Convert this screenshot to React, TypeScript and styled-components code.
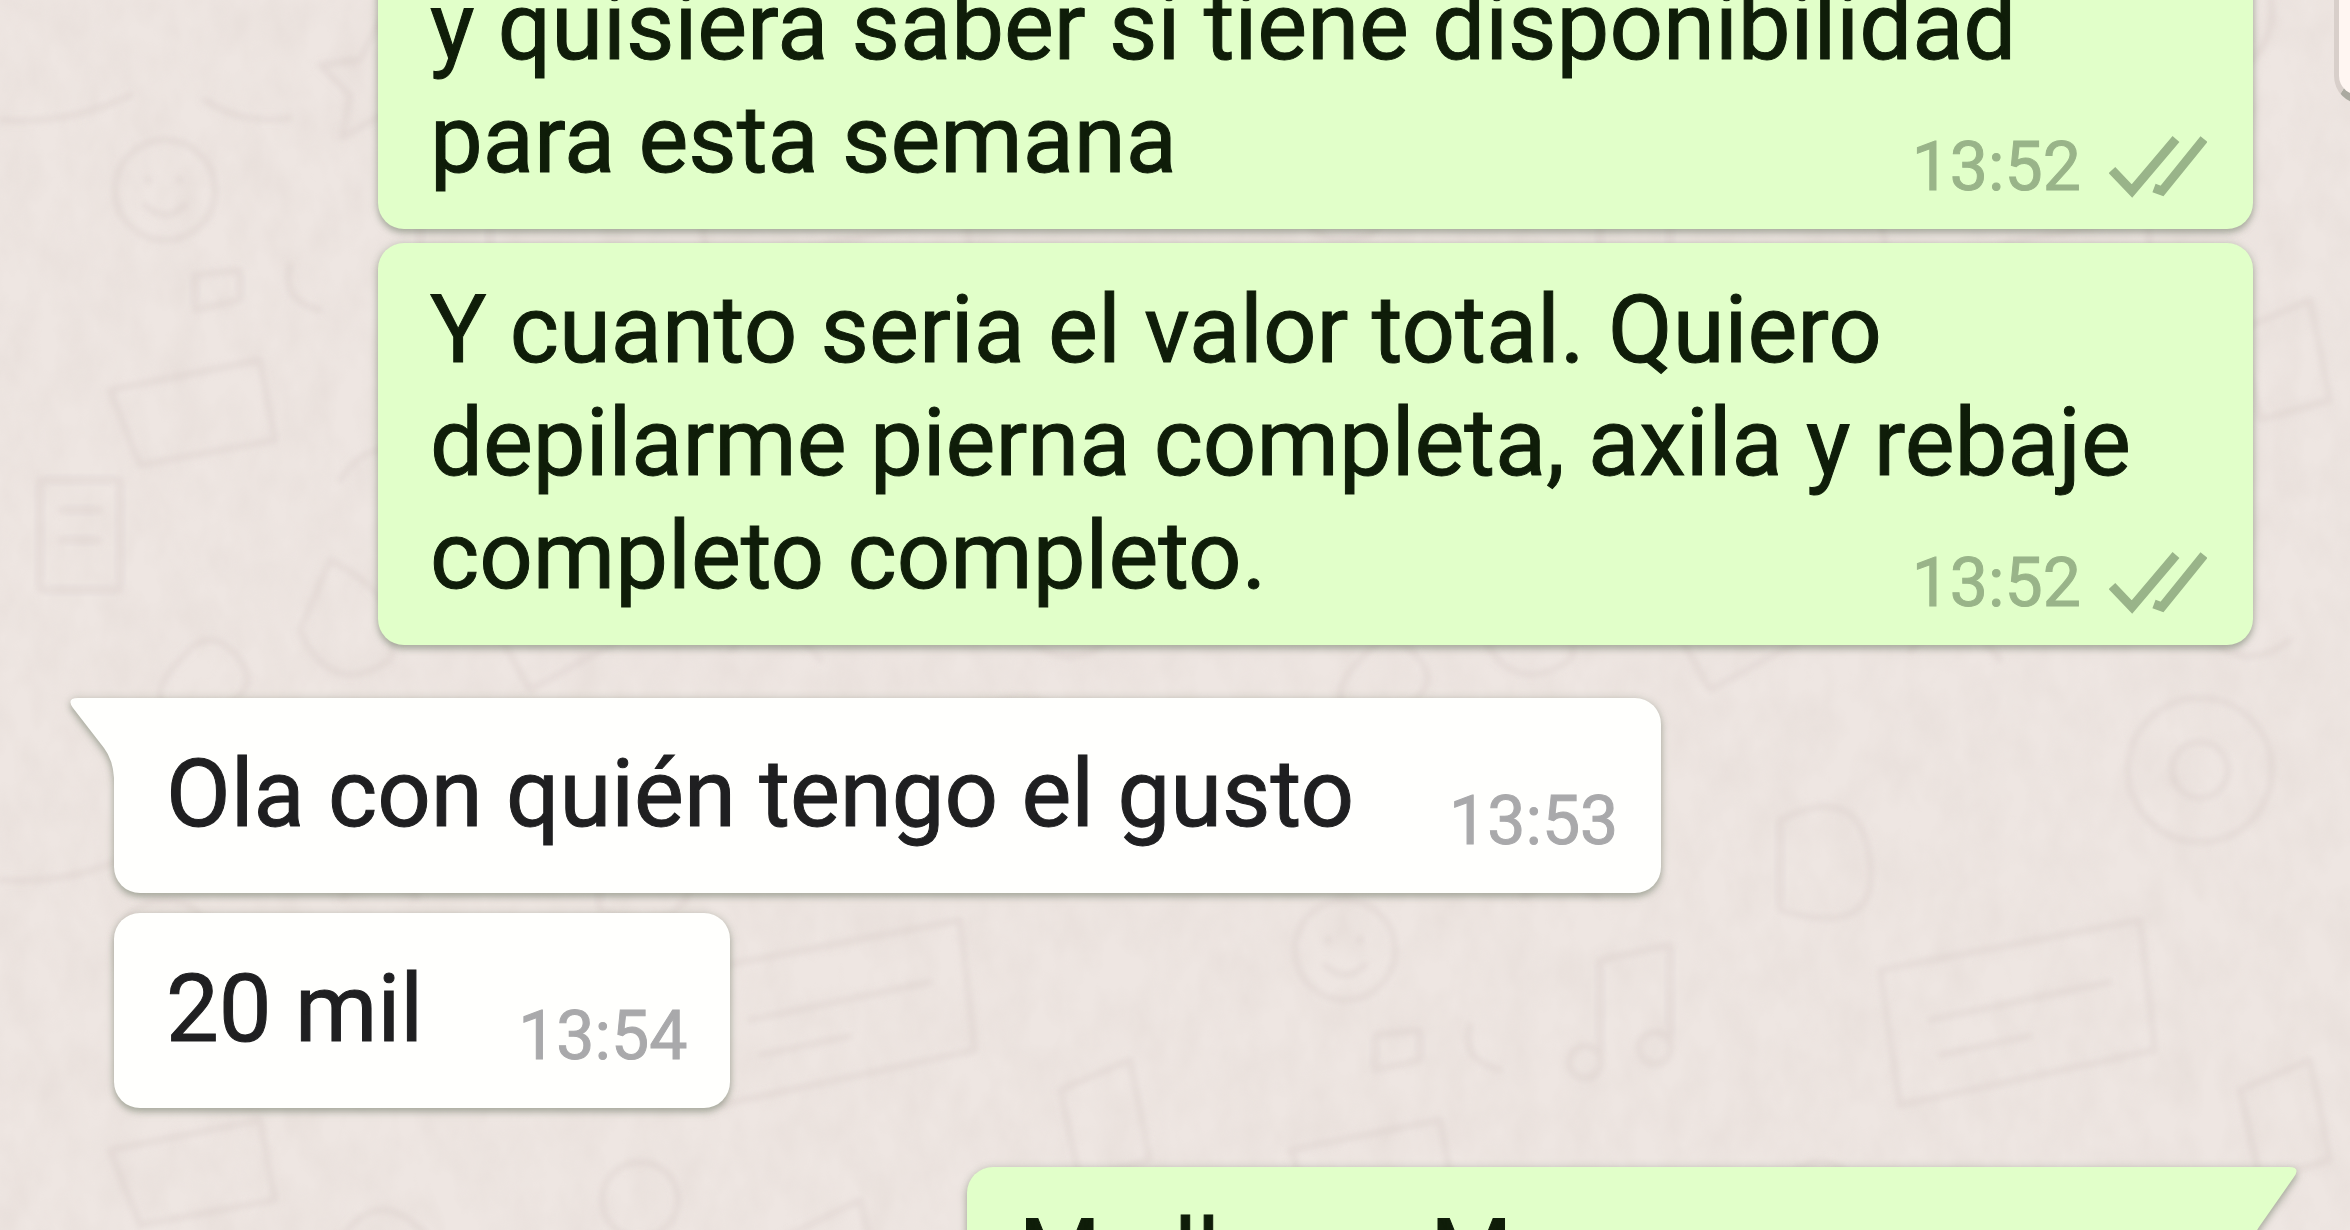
import React from 'react';
import styled, { createGlobalStyle, css } from 'styled-components';

const GlobalStyle = createGlobalStyle`
  * { box-sizing: border-box; }
  html, body { margin: 0; }
  body { background: #eee6e2; overflow: hidden; }
`;

type Side = 'sent' | 'received';

const Chat = styled.main`
  position: relative;
  isolation: isolate;
  height: 100vh;
  overflow: hidden;
  padding: 0 97px 0 114px;
  font-family: Roboto, 'Liberation Sans', sans-serif;
`;

const Wallpaper = styled.svg`
  position: absolute;
  inset: 0;
  z-index: -1;
  width: 100%;
  height: 100%;
`;

const Thread = styled.ol`
  display: flex;
  flex-direction: column;
  gap: 14px;
  margin: -60px 0 0;
  padding: 0;
  list-style: none;
`;

const Row = styled.li<{ $side: Side; $opensGroup?: boolean }>`
  display: flex;
  justify-content: ${(p) => (p.$side === 'sent' ? 'flex-end' : 'flex-start')};
  margin-top: ${(p) => (p.$opensGroup ? 39 : 0)}px;
  margin-bottom: ${(p) => (p.$side === 'received' ? 6 : 0)}px;
`;

const Bubble = styled.article<{ $side: Side; $tail?: boolean }>`
  position: relative;
  max-width: calc(100% - 264px);
  border-radius: 26px;
  color: #0f1d09;
  background: #e1ffc9;
  padding: 31px 46px 22px 52px;
  filter: drop-shadow(0 4px 3px rgba(100, 112, 92, 0.4)) drop-shadow(0 0 4px rgba(100, 112, 92, 0.24));
  ${(p) =>
    p.$side === 'received' &&
    css`
      color: #1f1f21;
      background: #fffffd;
      padding: 40px 43px 32px 52px;
    `}
  ${(p) => p.$tail && (p.$side === 'sent' ? 'border-top-right-radius: 0;' : 'border-top-left-radius: 0;')}
`;

const Text = styled.div`
  display: flow-root;
  font-size: 94px;
  line-height: 113px;
  -webkit-text-stroke: 1px currentColor;
`;

const Meta = styled.span<{ $side: Side }>`
  float: right;
  display: flex;
  align-items: center;
  gap: 28px;
  height: 80px;
  margin: 43px 0 0 ${(p) => (p.$side === 'received' ? 95 : 64)}px;
  color: ${(p) => (p.$side === 'received' ? '#a9a9ab' : '#99b489')};
`;

const Time = styled.time`
  font-size: 68px;
  line-height: 80px;
`;

const Ticks = styled.svg`
  width: 98px;
  height: 64px;
`;

const Tail = styled.svg<{ $side: Side }>`
  position: absolute;
  top: 0;
  width: 52px;
  height: 80px;
  ${(p) => (p.$side === 'sent' ? 'left: calc(100% - 6px);' : 'right: calc(100% - 6px);')}
`;

const EdgePanel = styled.div`
  position: absolute;
  top: -100px;
  left: calc(100% - 16px);
  width: 120px;
  height: 204px;
  border: 5px solid #d8cfca;
  border-bottom: 8px solid #aaa9a0;
  border-radius: 28px;
  background: #fff6f2;
`;

function ChatWallpaper() {
  return (
    <Wallpaper aria-hidden="true">
      <defs>
        <filter id="grain" x="0" y="0" width="100%" height="100%">
          <feTurbulence type="fractalNoise" baseFrequency="0.03 0.02" numOctaves="3" seed="7" />
          <feColorMatrix values="0 0 0 0 0.62  0 0 0 0 0.54  0 0 0 0 0.5  0.5 0.3 0 0 -0.3" />
        </filter>
        <filter id="soften">
          <feGaussianBlur stdDeviation="3" />
        </filter>
        <pattern id="doodles" width="1180" height="760" patternUnits="userSpaceOnUse">
          <g fill="none" stroke="#dfd4d0" strokeWidth="6" strokeLinecap="round" strokeLinejoin="round" filter="url(#soften)" opacity="0.6">
            <circle cx="1020" cy="10" r="72" />
            <circle cx="1020" cy="10" r="28" />
            <circle cx="1020" cy="770" r="72" />
            <circle cx="1020" cy="770" r="28" />
            <path d="M700 210L960 160L975 290L720 345Z" />
            <path d="M750 260L930 222M760 295L850 276" />
            <circle cx="165" cy="190" r="50" />
            <path d="M145 205Q165 225 185 205M148 178V182M180 178V182" />
            <path d="M110 390L260 360L275 440L140 465Z" />
            <path d="M0 120Q70 125 130 95M205 100Q240 125 290 118" />
            <path d="M290 265Q280 300 320 310M195 275V310L240 300V270Z" />
            <path d="M40 480H120V590H40ZM60 510H100M60 540H100" />
            <path d="M340 480Q380 420 430 480T520 490" />
            <path d="M330 560Q410 600 390 660Q330 700 300 630Z" />
            <path d="M480 600L570 550L620 640L530 690Z" />
            <circle cx="640" cy="440" r="38" />
            <path d="M600 60Q680 20 690 100T600 150Z" />
            <path d="M420 200V300M420 200L490 185V285" />
            <circle cx="405" cy="302" r="16" />
            <circle cx="475" cy="288" r="16" />
            <path d="M780 480L860 440L880 520L810 560ZM900 610Q960 560 1010 620T1110 640" />
            <path d="M730 650Q780 600 820 660M1060 330L1130 300L1150 400L1080 420Z" />
            <path d="M360 60L380 20L400 60L440 65L410 95L418 138L380 116L342 138L350 95L320 65Z" />
            <path d="M180 660Q210 620 240 660T180 720Q140 700 180 660Z" />
          </g>
        </pattern>
      </defs>
      <rect width="100%" height="100%" fill="url(#doodles)" />
      <rect width="100%" height="100%" filter="url(#grain)" opacity="0.5" />
    </Wallpaper>
  );
}

function DoubleTick() {
  return (
    <Ticks viewBox="0 0 98 64" fill="none" stroke="currentColor" strokeWidth="9" role="img" aria-label="Entregado">
      <path d="M3 35L23 56L67 4" />
      <path d="M45 53L53 56L95 4" />
    </Ticks>
  );
}

type MessageProps = { side: Side; text: string; time: string; tail?: boolean; opensGroup?: boolean };

function Message({ side, text, time, tail, opensGroup }: MessageProps) {
  return (
    <Row $side={side} $opensGroup={opensGroup}>
      <Bubble $side={side} $tail={tail}>
        {tail && (
          <Tail $side={side} viewBox="0 0 52 80" aria-hidden="true">
            <path
              d={side === 'sent' ? 'M0 0H42Q54 0 47 10L12 60Q6 68 6 80H0Z' : 'M52 0H10Q-2 0 5 10L36 50Q45 62 46 80H52Z'}
              fill={side === 'sent' ? '#e1ffc9' : '#fffffd'}
            />
          </Tail>
        )}
        <Text>
          {text}
          <Meta $side={side}>
            <Time>{time}</Time>
            {side === 'sent' && <DoubleTick />}
          </Meta>
        </Text>
      </Bubble>
    </Row>
  );
}

const messages: MessageProps[] = [
  { side: 'sent', time: '13:52', text: 'y quisiera saber si tiene disponibilidad para esta semana' },
  {
    side: 'sent',
    time: '13:52',
    text: 'Y cuanto seria el valor total. Quiero depilarme pierna completa, axila y rebaje completo completo.',
  },
  { side: 'received', time: '13:53', text: 'Ola con quién tengo el gusto', tail: true, opensGroup: true },
  { side: 'received', time: '13:54', text: '20 mil' },
  { side: 'sent', time: '13:54', text: 'Me llamo Macarena', tail: true, opensGroup: true },
];

export default function App() {
  return (
    <Chat>
      <GlobalStyle />
      <ChatWallpaper />
      <Thread>
        {messages.map((m, i) => (
          <Message key={i} {...m} />
        ))}
      </Thread>
      <EdgePanel />
    </Chat>
  );
}
